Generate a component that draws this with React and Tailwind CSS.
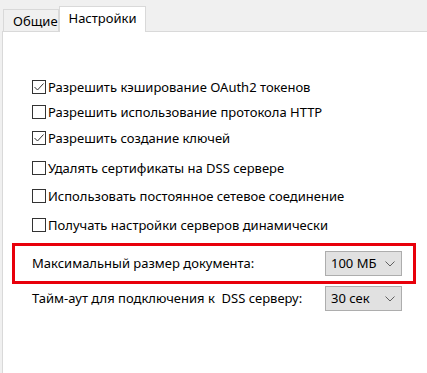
import React from 'react';

const options = [
    { label: 'Разрешить кэширование OAuth2 токенов', checked: true, mt: 'mt-[48px]' },
    { label: 'Разрешить использование протокола HTTP', checked: false, mt: 'mt-[11px]' },
    { label: 'Разрешить создание ключей', checked: true, mt: 'mt-[12px]' },
    { label: 'Удалять сертификаты на DSS сервере', checked: false, mt: 'mt-[16px]' },
    { label: 'Использовать постоянное сетевое соединение', checked: false, mt: 'mt-[14px]' },
    { label: 'Получать настройки серверов динамически', checked: false, mt: 'mt-[15px]' },
];

function CheckBox({ checked }) {
    return (
        <div className="w-[14px] h-[14px] border border-[#333333] bg-white shrink-0 flex items-center justify-center">
            {checked && (
                <svg width="12" height="12" viewBox="0 0 12 12">
                    <polyline points="1.5,6 4.5,9 10.5,2.5" fill="none" stroke="#333333" strokeWidth="1" />
                </svg>
            )}
        </div>
    );
}

function Combo({ value }) {
    return (
        <div className="w-[77px] h-[25px] border border-[#adadad] bg-[#e1e1e1] flex items-center justify-between pl-[5px] pr-[6px]">
            <span>{value}</span>
            <svg width="10" height="6" viewBox="0 0 10 6">
                <polyline points="0.5,0.5 5,5 9.5,0.5" fill="none" stroke="#606060" strokeWidth="1" />
            </svg>
        </div>
    );
}

export default function App() {
    return (
        <div className="w-[427px] h-[373px] bg-[#f0f0f0] overflow-hidden flex flex-col text-[13px] text-black" style={{ fontFamily: '"Noto Sans", "Open Sans", sans-serif' }}>
            {/* tabs */}
            <div className="flex items-end pl-[3px] pt-[5px] h-[31px] shrink-0">
                <div className="w-[56px] h-[22px] border border-b-0 border-[#d9d9d9] bg-[#f0f0f0] flex items-center pl-[9px] pt-[2px] leading-none">Общие</div>
                <div className="w-[87px] h-[26px] border border-b-0 border-[#d9d9d9] bg-white -mb-px relative z-10 flex items-center justify-center leading-none pb-[2px]">Настройки</div>
            </div>

            {/* panel */}
            <div className="flex-1 ml-[2px] -mr-px border-l border-t border-[#d9d9d9] bg-white flex flex-col">
                <div className="flex flex-col pl-[29px]">
                    {options.map((o) => (
                        <div key={o.label} className={`flex items-center gap-[2px] h-[14px] ${o.mt}`}>
                            <CheckBox checked={o.checked} />
                            <span className="whitespace-nowrap leading-none">{o.label}</span>
                        </div>
                    ))}
                </div>

                <div className="mt-[11px] ml-[9px] w-[404px] border-[3px] border-[#e8000b] flex items-center justify-between py-[5px] pl-[17px] pr-[11px]">
                    <span className="whitespace-nowrap">Максимальный размер документа:</span>
                    <Combo value="100 МБ" />
                </div>

                <div className="mt-[2px] ml-[9px] w-[404px] flex items-center justify-between pl-[20px] pr-[14px]">
                    <span className="whitespace-nowrap">Тайм-аут для подключения к&nbsp; DSS серверу:</span>
                    <Combo value="30 сек" />
                </div>
            </div>
        </div>
    );
}
